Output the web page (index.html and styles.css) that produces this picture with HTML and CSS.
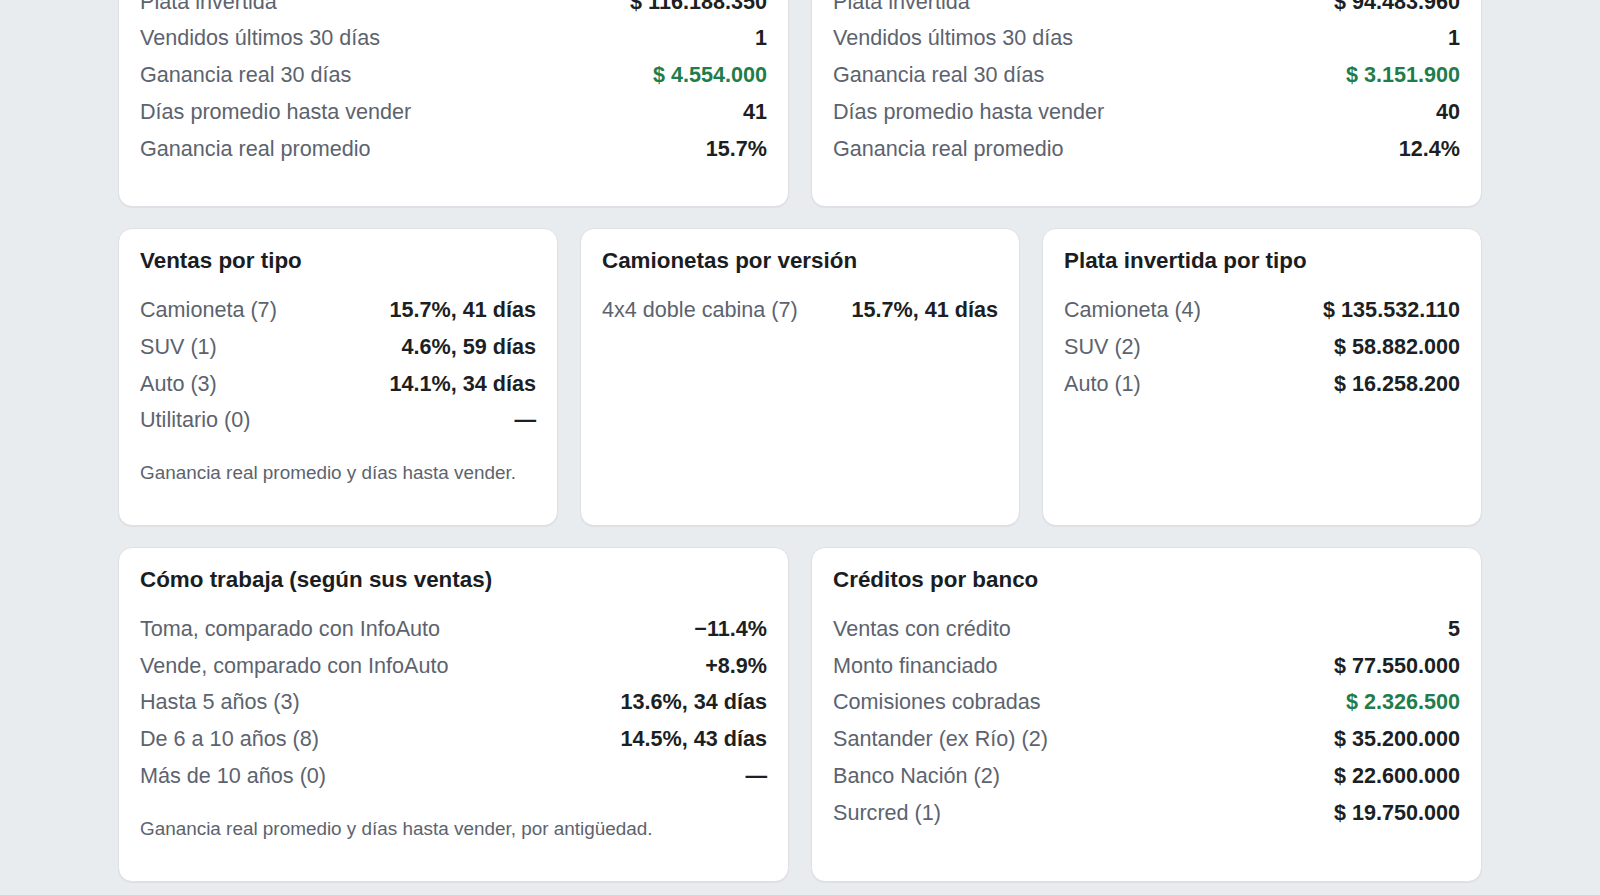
FILE: index.html
```html
<!DOCTYPE html>
<html lang="es">
<head>
<meta charset="utf-8">
<title>Vendedor</title>
<link rel="stylesheet" href="styles.css">
</head>
<body>
<main class="page">
  <section class="grid two">
    <div class="card">
      <h2 class="card-title">Stock del vendedor</h2>
      <div class="row"><span class="label">Autos en stock</span><span class="value">7</span></div>
      <div class="row"><span class="label">Plata invertida</span><span class="value">$ 116.188.350</span></div>
      <div class="row"><span class="label">Vendidos últimos 30 días</span><span class="value">1</span></div>
      <div class="row"><span class="label">Ganancia real 30 días</span><span class="value green">$ 4.554.000</span></div>
      <div class="row"><span class="label">Días promedio hasta vender</span><span class="value">41</span></div>
      <div class="row"><span class="label">Ganancia real promedio</span><span class="value">15.7%</span></div>
    </div>
    <div class="card">
      <h2 class="card-title">Promedio de la agencia</h2>
      <div class="row"><span class="label">Autos en stock</span><span class="value">6</span></div>
      <div class="row"><span class="label">Plata invertida</span><span class="value">$ 94.483.960</span></div>
      <div class="row"><span class="label">Vendidos últimos 30 días</span><span class="value">1</span></div>
      <div class="row"><span class="label">Ganancia real 30 días</span><span class="value green">$ 3.151.900</span></div>
      <div class="row"><span class="label">Días promedio hasta vender</span><span class="value">40</span></div>
      <div class="row"><span class="label">Ganancia real promedio</span><span class="value">12.4%</span></div>
    </div>
  </section>

  <section class="grid three">
    <div class="card">
      <h2 class="card-title">Ventas por tipo</h2>
      <div class="row"><span class="label">Camioneta (7)</span><span class="value">15.7%, 41 días</span></div>
      <div class="row"><span class="label">SUV (1)</span><span class="value">4.6%, 59 días</span></div>
      <div class="row"><span class="label">Auto (3)</span><span class="value">14.1%, 34 días</span></div>
      <div class="row"><span class="label">Utilitario (0)</span><span class="value">—</span></div>
      <p class="note">Ganancia real promedio y días hasta vender.</p>
    </div>
    <div class="card">
      <h2 class="card-title">Camionetas por versión</h2>
      <div class="row"><span class="label">4x4 doble cabina (7)</span><span class="value">15.7%, 41 días</span></div>
    </div>
    <div class="card">
      <h2 class="card-title">Plata invertida por tipo</h2>
      <div class="row"><span class="label">Camioneta (4)</span><span class="value">$ 135.532.110</span></div>
      <div class="row"><span class="label">SUV (2)</span><span class="value">$ 58.882.000</span></div>
      <div class="row"><span class="label">Auto (1)</span><span class="value">$ 16.258.200</span></div>
    </div>
  </section>

  <section class="grid two">
    <div class="card">
      <h2 class="card-title">Cómo trabaja (según sus ventas)</h2>
      <div class="row"><span class="label">Toma, comparado con InfoAuto</span><span class="value">−11.4%</span></div>
      <div class="row"><span class="label">Vende, comparado con InfoAuto</span><span class="value">+8.9%</span></div>
      <div class="row"><span class="label">Hasta 5 años (3)</span><span class="value">13.6%, 34 días</span></div>
      <div class="row"><span class="label">De 6 a 10 años (8)</span><span class="value">14.5%, 43 días</span></div>
      <div class="row"><span class="label">Más de 10 años (0)</span><span class="value">—</span></div>
      <p class="note">Ganancia real promedio y días hasta vender, por antigüedad.</p>
    </div>
    <div class="card">
      <h2 class="card-title">Créditos por banco</h2>
      <div class="row"><span class="label">Ventas con crédito</span><span class="value">5</span></div>
      <div class="row"><span class="label">Monto financiado</span><span class="value">$ 77.550.000</span></div>
      <div class="row"><span class="label">Comisiones cobradas</span><span class="value green">$ 2.326.500</span></div>
      <div class="row"><span class="label">Santander (ex Río) (2)</span><span class="value">$ 35.200.000</span></div>
      <div class="row"><span class="label">Banco Nación (2)</span><span class="value">$ 22.600.000</span></div>
      <div class="row"><span class="label">Surcred (1)</span><span class="value">$ 19.750.000</span></div>
    </div>
  </section>
</main>
</body>
</html>
```

FILE: styles.css
```css
html, body {
  margin: 0;
  padding: 0;
  background: #e9ecef;
  font-family: "Liberation Sans", Arial, sans-serif;
  color: #1c1f23;
}

.page {
  width: 1364px;
  margin: -117px auto 0;
  display: flex;
  flex-direction: column;
  gap: 21px;
  padding-bottom: 40px;
}

.grid {
  display: grid;
  gap: 22px;
}

.grid.two {
  grid-template-columns: 1fr 1fr;
}

.grid.three {
  grid-template-columns: 1fr 1fr 1fr;
}

.card {
  background: #ffffff;
  border: 1px solid #dde1e6;
  border-radius: 14px;
  box-shadow: 0 1px 1px rgba(20, 30, 45, 0.06);
  padding: 18px 21px 39px;
  display: flex;
  flex-direction: column;
}

.card-title {
  margin: 0 0 18px;
  font-size: 22.4px;
  line-height: 27px;
  font-weight: 700;
  color: #1a1d21;
}

.row {
  display: flex;
  justify-content: space-between;
  align-items: baseline;
  font-size: 21.6px;
  line-height: 36.7px;
}

.label {
  color: #5c636e;
}

.value {
  font-weight: 700;
  color: #1c1f23;
}

.value.green {
  color: #1f7d4b;
}

.note {
  margin: 21px 0 0;
  font-size: 18.9px;
  line-height: 26px;
  color: #5c636e;
}
```
